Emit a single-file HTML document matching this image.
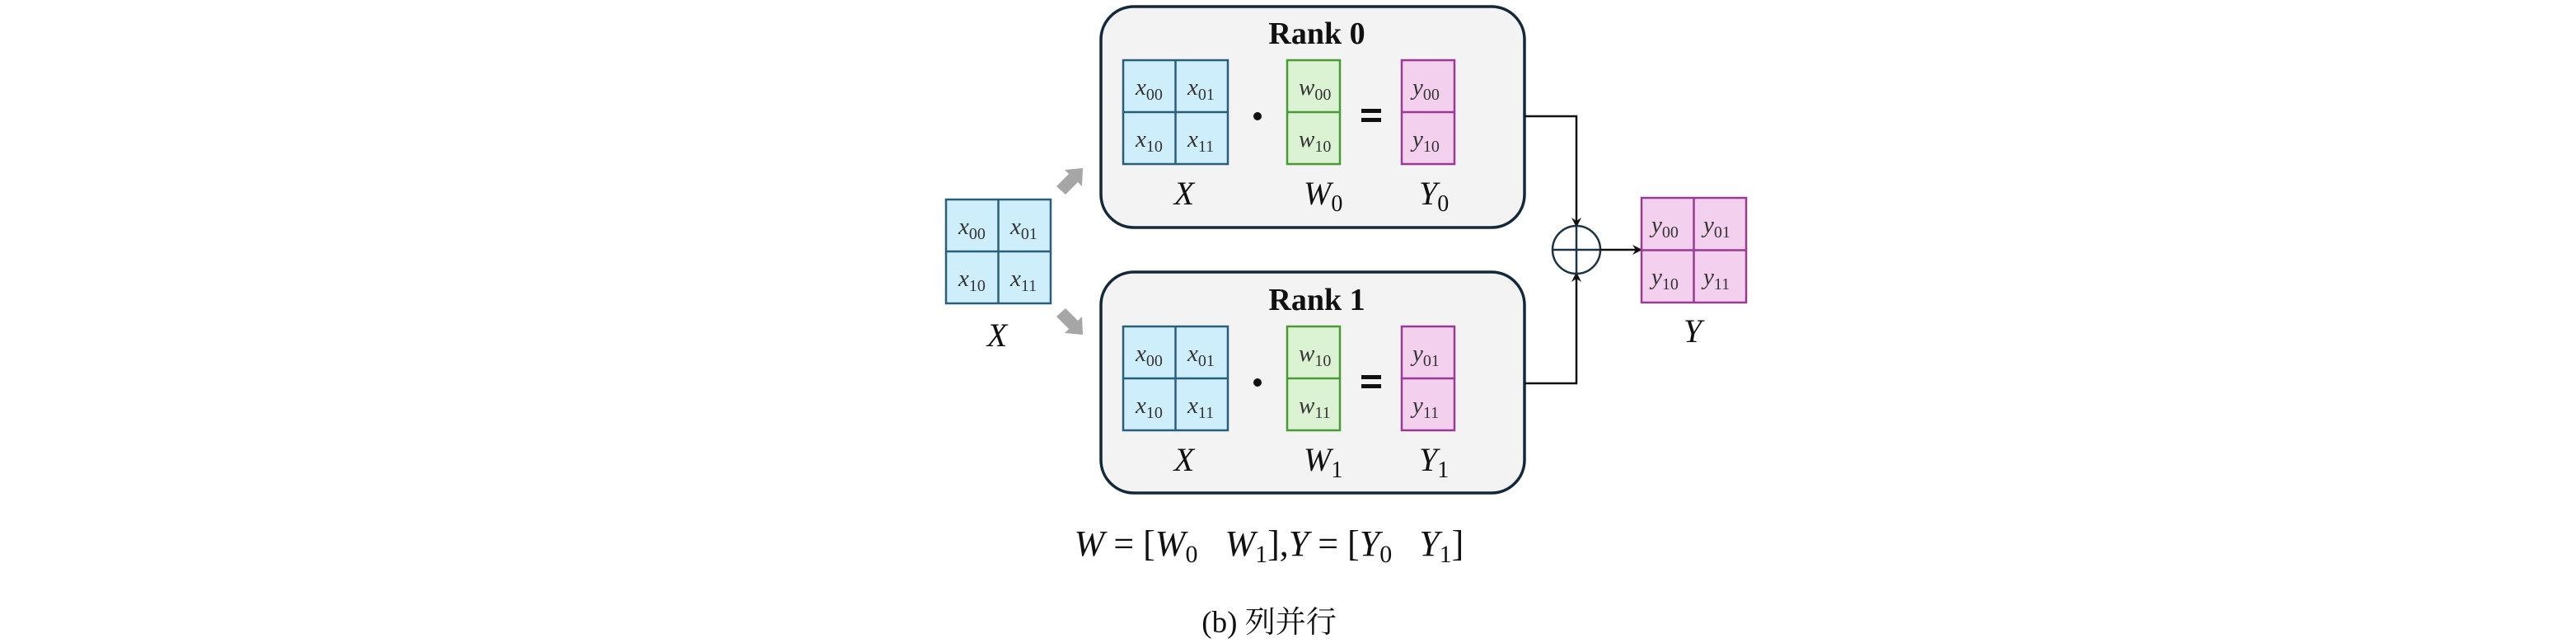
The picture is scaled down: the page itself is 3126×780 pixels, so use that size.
<!DOCTYPE html>
<html><head><meta charset="utf-8"><style>
html,body{margin:0;padding:0;background:#fff;}
svg{display:block;}
text{font-family:"Liberation Serif","DejaVu Serif",serif;}
.c{font-style:italic;font-size:29px;fill:#333;}
.s{font-style:normal;font-size:20px;}
.l{font-style:italic;font-size:40px;fill:#111;}
.ls{font-style:normal;font-size:28px;}
</style></head><body>
<svg width="3126" height="780" viewBox="0 0 3126 780" xmlns="http://www.w3.org/2000/svg">
<defs>
<marker id="ah" markerWidth="12" markerHeight="12" refX="10" refY="6" orient="auto" markerUnits="userSpaceOnUse">
<path d="M0,0 L12,6 L0,12 L4,6 z" fill="#111"/></marker>
<g id="xm">
<rect x="0" y="0" width="127" height="126" fill="#cdeefa" stroke="#2a5f7c" stroke-width="2.5"/>
<line x1="63.5" y1="0" x2="63.5" y2="126" stroke="#2a5f7c" stroke-width="2.5"/>
<line x1="0" y1="63" x2="127" y2="63" stroke="#2a5f7c" stroke-width="2.5"/>
<text class="c" x="15" y="42">x<tspan class="s" dy="6">00</tspan></text>
<text class="c" x="78" y="42">x<tspan class="s" dy="6">01</tspan></text>
<text class="c" x="15" y="105">x<tspan class="s" dy="6">10</tspan></text>
<text class="c" x="78" y="105">x<tspan class="s" dy="6">11</tspan></text>
</g>
</defs>

<rect x="1336" y="8" width="514" height="268" rx="40" fill="#f3f3f3" stroke="#14283a" stroke-width="3.5"/>
<rect x="1336" y="330" width="514" height="268" rx="40" fill="#f3f3f3" stroke="#14283a" stroke-width="3.5"/>
<text x="1598" y="53" text-anchor="middle" font-weight="bold" font-size="38" fill="#111">Rank 0</text>
<text x="1598" y="376" text-anchor="middle" font-weight="bold" font-size="38" fill="#111">Rank 1</text>

<use href="#xm" x="1363" y="73"/>
<circle cx="1526" cy="141" r="5" fill="#111"/>
<rect x="1562" y="73" width="64" height="126" fill="#dcf3d3" stroke="#4a9a38" stroke-width="2.5"/>
<line x1="1562" y1="136" x2="1626" y2="136" stroke="#4a9a38" stroke-width="2.5"/>
<text class="c" x="1576" y="115" >w<tspan class="s" dy="6">00</tspan></text>
<text class="c" x="1576" y="178">w<tspan class="s" dy="6">10</tspan></text>
<rect x="1652" y="132" width="24" height="5" fill="#111"/><rect x="1652" y="143" width="24" height="5" fill="#111"/>
<rect x="1701" y="73" width="64" height="126" fill="#f3d0ee" stroke="#9a3a94" stroke-width="2.5"/>
<line x1="1701" y1="136" x2="1765" y2="136" stroke="#9a3a94" stroke-width="2.5"/>
<text class="c" x="1714" y="115">y<tspan class="s" dy="6">00</tspan></text>
<text class="c" x="1714" y="178">y<tspan class="s" dy="6">10</tspan></text>
<text class="l" x="1437" y="248" text-anchor="middle">X</text>
<text class="l" x="1582" y="248">W<tspan class="ls" dy="8">0</tspan></text>
<text class="l" x="1722" y="248">Y<tspan class="ls" dy="8">0</tspan></text>

<use href="#xm" x="1363" y="396"/>
<circle cx="1526" cy="464" r="5" fill="#111"/>
<rect x="1562" y="396" width="64" height="126" fill="#dcf3d3" stroke="#4a9a38" stroke-width="2.5"/>
<line x1="1562" y1="459" x2="1626" y2="459" stroke="#4a9a38" stroke-width="2.5"/>
<text class="c" x="1576" y="438">w<tspan class="s" dy="6">10</tspan></text>
<text class="c" x="1576" y="501">w<tspan class="s" dy="6">11</tspan></text>
<rect x="1652" y="455" width="24" height="5" fill="#111"/><rect x="1652" y="466" width="24" height="5" fill="#111"/>
<rect x="1701" y="396" width="64" height="126" fill="#f3d0ee" stroke="#9a3a94" stroke-width="2.5"/>
<line x1="1701" y1="459" x2="1765" y2="459" stroke="#9a3a94" stroke-width="2.5"/>
<text class="c" x="1714" y="438">y<tspan class="s" dy="6">01</tspan></text>
<text class="c" x="1714" y="501">y<tspan class="s" dy="6">11</tspan></text>
<text class="l" x="1437" y="571" text-anchor="middle">X</text>
<text class="l" x="1582" y="571">W<tspan class="ls" dy="8">1</tspan></text>
<text class="l" x="1722" y="571">Y<tspan class="ls" dy="8">1</tspan></text>

<use href="#xm" x="1148" y="242"/>
<text class="l" x="1210" y="420" text-anchor="middle">X</text>

<path d="M1282,226 L1297,211 L1292,206 L1314,204 L1313,226 L1308,221 L1293,236 z" fill="#a6a6a6"/>
<path d="M1282,384 L1297,399 L1292,404 L1314,406 L1313,384 L1308,389 L1293,374 z" fill="#a6a6a6"/>

<polyline points="1850,141 1913,141 1913,274" fill="none" stroke="#111" stroke-width="2.5" marker-end="url(#ah)"/>
<polyline points="1850,465 1913,465 1913,332" fill="none" stroke="#111" stroke-width="2.5" marker-end="url(#ah)"/>
<circle cx="1913" cy="303" r="29" fill="#fff" stroke="#1c3344" stroke-width="2.5"/>
<line x1="1884" y1="303" x2="1942" y2="303" stroke="#1c3344" stroke-width="2.5"/>
<line x1="1913" y1="274" x2="1913" y2="332" stroke="#1c3344" stroke-width="2.5"/>
<line x1="1942" y1="303" x2="1991" y2="303" stroke="#111" stroke-width="2.5" marker-end="url(#ah)"/>

<rect x="1992" y="240" width="127" height="127" fill="#f3d0ee" stroke="#9a3a94" stroke-width="2.5"/>
<line x1="2055.5" y1="240" x2="2055.5" y2="367" stroke="#9a3a94" stroke-width="2.5"/>
<line x1="1992" y1="303.5" x2="2119" y2="303.5" stroke="#9a3a94" stroke-width="2.5"/>
<text class="c" x="2004" y="282">y<tspan class="s" dy="6">00</tspan></text>
<text class="c" x="2067" y="282">y<tspan class="s" dy="6">01</tspan></text>
<text class="c" x="2004" y="345">y<tspan class="s" dy="6">10</tspan></text>
<text class="c" x="2067" y="345">y<tspan class="s" dy="6">11</tspan></text>
<text class="l" x="2054" y="415" text-anchor="middle">Y</text>

<text x="1540" y="674" text-anchor="middle" font-size="44" fill="#111" xml:space="preserve"><tspan font-style="italic">W</tspan> = [<tspan font-style="italic">W</tspan><tspan font-size="30" dy="8">0</tspan><tspan dy="-8">   </tspan><tspan font-style="italic">W</tspan><tspan font-size="30" dy="8">1</tspan><tspan dy="-8">],</tspan><tspan font-style="italic">Y</tspan> = [<tspan font-style="italic">Y</tspan><tspan font-size="30" dy="8">0</tspan><tspan dy="-8">   </tspan><tspan font-style="italic">Y</tspan><tspan font-size="30" dy="8">1</tspan><tspan dy="-8">]</tspan></text>

<text x="1540" y="767" text-anchor="middle" font-size="37" fill="#111" style="font-family:'Liberation Serif','Noto Serif CJK SC',serif">(b) 列并行</text>
</svg>
</body></html>
